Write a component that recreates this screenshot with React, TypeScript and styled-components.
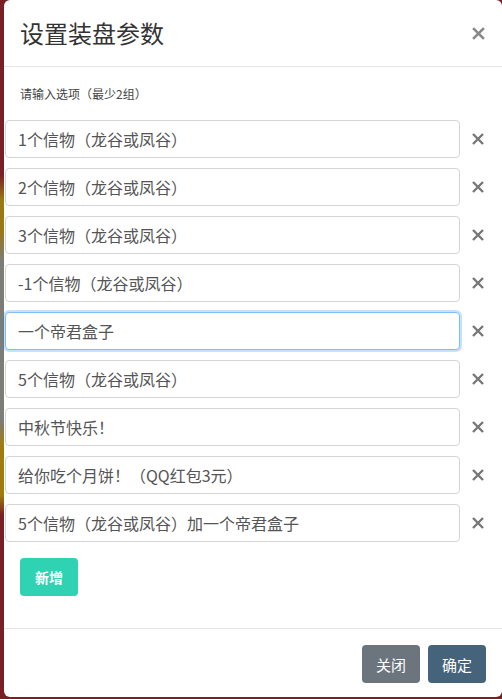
import React from 'react'
import styled, { createGlobalStyle, css } from 'styled-components'

const options = [
  '1个信物（龙谷或凤谷）',
  '2个信物（龙谷或凤谷）',
  '3个信物（龙谷或凤谷）',
  '-1个信物（龙谷或凤谷）',
  '一个帝君盒子',
  '5个信物（龙谷或凤谷）',
  '中秋节快乐！',
  '给你吃个月饼！（QQ红包3元）',
  '5个信物（龙谷或凤谷）加一个帝君盒子',
]

const GlobalStyle = createGlobalStyle`
  html, body {
    margin: 0;
    padding: 0;
    height: 699px;
    overflow: hidden;
  }
  body {
    font-family: "Noto Sans CJK SC", "Liberation Sans", sans-serif;
  }
`

const Page = styled.div`
  display: flex;
  height: 699px;
  padding-left: 4px;
  box-sizing: border-box;
  background: linear-gradient(
    to bottom,
    #7a1f26 0px,
    #7a1f26 175px,
    #9a7814 200px,
    #9a7814 230px,
    #7c7c78 262px,
    #7c7c78 420px,
    #a07c10 445px,
    #a07c10 495px,
    #7a1f26 515px,
    #7a1f26 699px
  );
`

const Modal = styled.div`
  width: 498px;
  height: 697px;
  background: #fff;
  border-radius: 6px;
  display: flex;
  flex-direction: column;
  box-sizing: border-box;
`

const Header = styled.div`
  display: flex;
  align-items: center;
  justify-content: space-between;
  height: 67px;
  box-sizing: border-box;
  padding: 0 12px 0 16px;
  border-bottom: 1px solid #e5e5e5;
`

const Title = styled.h4`
  margin: 0;
  font-size: 24px;
  font-weight: 400;
  color: #333;
  line-height: 36px;
`

const Body = styled.div`
  flex: 1;
  padding: 18px 0 0 1px;
`

const Hint = styled.div`
  font-size: 12px;
  line-height: 18px;
  color: #444;
  padding-left: 15px;
  margin-bottom: 17px;
`

const List = styled.div`
  display: flex;
  flex-direction: column;
  gap: 10px;
`

const Row = styled.div`
  display: flex;
  align-items: center;
`

const OptionInput = styled.input<{ $focused?: boolean }>`
  width: 455px;
  height: 38px;
  box-sizing: border-box;
  padding: 0 12px;
  font-family: inherit;
  font-size: 16px;
  color: #555;
  background: #fff;
  border: 1px solid #d4d4d4;
  border-radius: 4px;
  outline: none;
  ${(p) =>
    p.$focused &&
    css`
      border-color: #80bdff;
      box-shadow: 0 0 0 2px rgba(0, 123, 255, 0.22);
    `}
`

const IconButton = styled.button<{ $header?: boolean }>`
  display: flex;
  align-items: center;
  justify-content: center;
  width: ${(p) => (p.$header ? '24px' : '35px')};
  height: 38px;
  padding: 0;
  border: none;
  background: transparent;
  color: ${(p) => (p.$header ? '#888' : '#777')};
  cursor: pointer;
`

const AddButton = styled.button`
  margin: 16px 0 0 15px;
  width: 58px;
  height: 38px;
  border: none;
  border-radius: 4px;
  background: #2fd3b3;
  color: #fff;
  font-family: inherit;
  font-size: 14px;
  font-weight: 700;
  cursor: pointer;
`

const Footer = styled.div`
  display: flex;
  justify-content: flex-end;
  gap: 8px;
  padding: 16px 16px 14px;
  border-top: 1px solid #e5e5e5;
`

const FooterButton = styled.button<{ $variant: 'close' | 'ok' }>`
  width: 58px;
  height: 38px;
  border: none;
  border-radius: 4px;
  color: #fff;
  font-family: inherit;
  font-size: 15px;
  cursor: pointer;
  background: ${(p) => (p.$variant === 'close' ? '#6c757d' : '#45637a')};
`

const Cross = ({ size = 12, width = 2.4 }: { size?: number; width?: number }) => (
  <svg width={size} height={size} viewBox="0 0 12 12">
    <path d="M1 1L11 11M11 1L1 11" stroke="currentColor" strokeWidth={width} strokeLinecap="butt" />
  </svg>
)

export default function App() {
  return (
    <>
      <GlobalStyle />
      <Page>
        <Modal>
          <Header>
            <Title>设置装盘参数</Title>
            <IconButton $header>
              <Cross size={13} />
            </IconButton>
          </Header>
          <Body>
            <Hint>请输入选项（最少2组）</Hint>
            <List>
              {options.map((text, i) => (
                <Row key={i}>
                  <OptionInput defaultValue={text} $focused={i === 4} />
                  <IconButton>
                    <Cross />
                  </IconButton>
                </Row>
              ))}
            </List>
            <AddButton>新增</AddButton>
          </Body>
          <Footer>
            <FooterButton $variant="close">关闭</FooterButton>
            <FooterButton $variant="ok">确定</FooterButton>
          </Footer>
        </Modal>
      </Page>
    </>
  )
}
